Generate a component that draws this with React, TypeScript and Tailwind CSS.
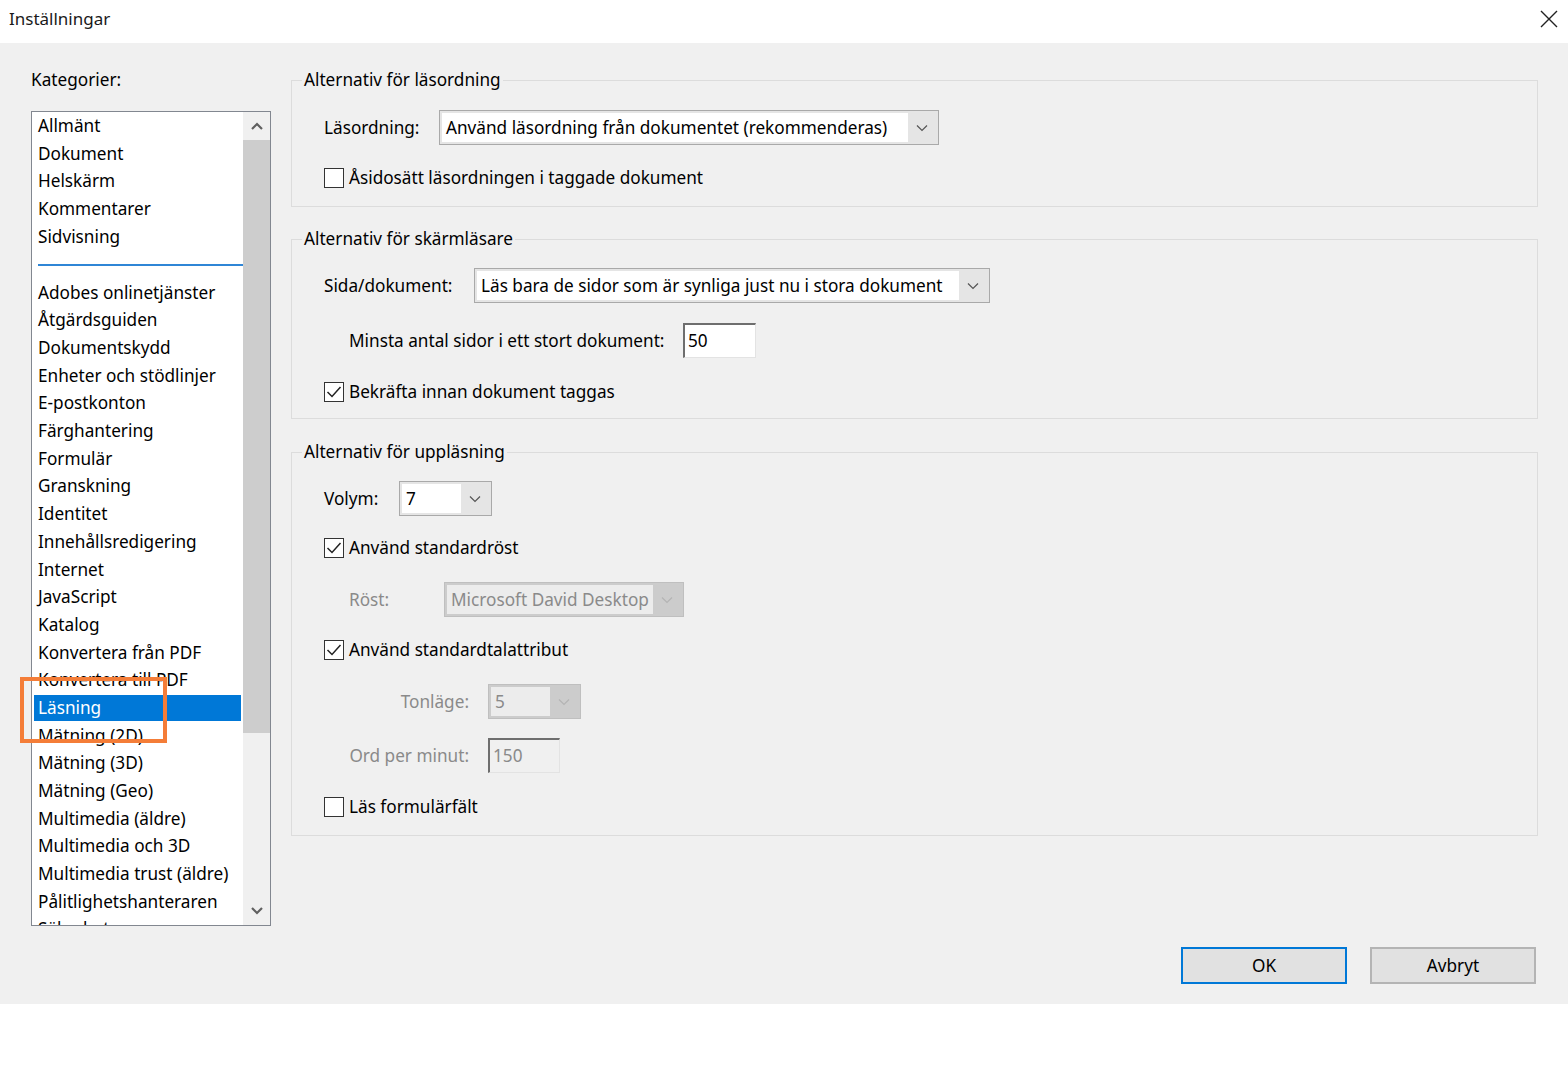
import { ReactNode } from "react";

const upperItems = ["Allmänt", "Dokument", "Helskärm", "Kommentarer", "Sidvisning"];

const lowerItems = [
  "Adobes onlinetjänster",
  "Åtgärdsguiden",
  "Dokumentskydd",
  "Enheter och stödlinjer",
  "E-postkonton",
  "Färghantering",
  "Formulär",
  "Granskning",
  "Identitet",
  "Innehållsredigering",
  "Internet",
  "JavaScript",
  "Katalog",
  "Konvertera från PDF",
  "Konvertera till PDF",
  "Läsning",
  "Mätning (2D)",
  "Mätning (3D)",
  "Mätning (Geo)",
  "Multimedia (äldre)",
  "Multimedia och 3D",
  "Multimedia trust (äldre)",
  "Pålitlighetshanteraren",
  "Säkerhet",
];

const Chevron = ({ disabled }: { disabled?: boolean }) => (
  <svg width="12" height="8" viewBox="0 0 12 8" fill="none">
    <path
      d="M1 1.5 L6 6.5 L11 1.5"
      stroke={disabled ? "#b4b4b4" : "#555"}
      strokeWidth="1.2"
    />
  </svg>
);

const Select = ({
  value,
  width,
  disabled,
}: {
  value: string;
  width: string;
  disabled?: boolean;
}) => (
  <div
    className={`${width} h-[35px] flex p-[2px] border ${
      disabled ? "bg-[#cccccc] border-[#bfbfbf]" : "bg-[#e5e5e5] border-[#a9a9a9]"
    }`}
  >
    <div
      className={`flex-1 flex items-center pl-[4px] whitespace-nowrap overflow-hidden ${
        disabled ? "bg-[#ececec] text-[#8a8a8a]" : "bg-white text-black"
      }`}
    >
      {value}
    </div>
    <div className="w-[28px] flex items-center justify-center">
      <Chevron disabled={disabled} />
    </div>
  </div>
);

const TextInput = ({ value, width, disabled }: { value: string; width: string; disabled?: boolean }) => (
  <div
    className={`${width} h-[35px] flex items-center pl-[3px] border-t-2 border-l-2 border-t-[#6e6e6e] border-l-[#6e6e6e] border-r border-b border-r-[#e3e3e3] border-b-[#e3e3e3] ${
      disabled ? "bg-[#f0f0f0] text-[#8a8a8a]" : "bg-white text-black"
    }`}
  >
    {value}
  </div>
);

const Checkbox = ({ checked, label }: { checked?: boolean; label: string }) => (
  <div className="flex items-center h-[20px]">
    <div className="w-[20px] h-[20px] border border-[#333] bg-white flex items-center justify-center">
      {checked && (
        <svg width="16" height="14" viewBox="0 0 16 14" fill="none">
          <path d="M1.5 7 L6 11.5 L14.5 2" stroke="#222" strokeWidth="1.5" />
        </svg>
      )}
    </div>
    <span className="ml-[5px] whitespace-nowrap">{label}</span>
  </div>
);

const Group = ({ title, className, children }: { title: string; className: string; children: ReactNode }) => (
  <div className={`relative border border-[#dcdcdc] ${className}`}>
    <span className="absolute left-[10px] -top-[13px] px-[2px] bg-[#f0f0f0] leading-[24px]">{title}</span>
    {children}
  </div>
);

const ListRow = ({ label, selected }: { label: string; selected?: boolean }) => (
  <div className="h-[27.68px] px-[2px] flex items-center">
    <div
      className={`w-full h-[26px] flex items-center pl-[4px] whitespace-nowrap ${
        selected ? "bg-[#0078d7] text-white" : "text-black"
      }`}
    >
      {label}
    </div>
  </div>
);

export default function App() {
  return (
    <div
      className="w-[1568px] h-[1066px] bg-white text-[17.2px] text-black overflow-hidden"
      style={{ fontFamily: '"Noto Sans", "Open Sans", sans-serif' }}
    >
      {/* title bar */}
      <div className="h-[43px] flex items-center justify-between pl-[9px] pr-[10px] pb-[6px]">
        <span className="text-[17px] text-[#1a1a1a]">Inställningar</span>
        <svg width="18" height="18" viewBox="0 0 18 18">
          <path d="M1 1 L17 17 M17 1 L1 17" stroke="#222" strokeWidth="1.4" />
        </svg>
      </div>

      {/* dialog body */}
      <div className="h-[961px] bg-[#f0f0f0] flex flex-col">
        <div className="flex">
          {/* categories */}
          <div className="relative pl-[31px] pt-[25px]">
            <div className="leading-[24px]">Kategorier:</div>
            <div className="mt-[19px] w-[240px] h-[815px] border border-[#828790] bg-white flex overflow-hidden">
              <div className="flex-1 overflow-hidden">
                {upperItems.map((item) => (
                  <ListRow key={item} label={item} />
                ))}
                <div className="h-[28.5px] flex items-center pl-[6px]">
                  <div className="w-full h-[2px] bg-[#2f86d6]" />
                </div>
                {lowerItems.map((item) => (
                  <ListRow key={item} label={item} selected={item === "Läsning"} />
                ))}
              </div>
              {/* scrollbar */}
              <div className="w-[27px] bg-[#f0f0f0] flex flex-col">
                <div className="h-[28px] flex items-center justify-center">
                  <svg width="12" height="8" viewBox="0 0 12 8" fill="none">
                    <path d="M1 7 L6 2 L11 7" stroke="#606060" strokeWidth="2.2" />
                  </svg>
                </div>
                <div className="h-[593px] bg-[#cdcdcd]" />
                <div className="flex-1" />
                <div className="h-[28px] flex items-center justify-center">
                  <svg width="12" height="8" viewBox="0 0 12 8" fill="none">
                    <path d="M1 1 L6 6 L11 1" stroke="#606060" strokeWidth="2.2" />
                  </svg>
                </div>
              </div>
            </div>
            {/* orange callout around the selected row */}
            <div className="absolute left-[20px] top-[634px] w-[147px] h-[66px] border-[4px] border-[#f47d38]" />
          </div>

          {/* option groups */}
          <div className="ml-[20px] pt-[37px] w-[1247px] flex flex-col">
            <Group title="Alternativ för läsordning" className="h-[127px] pl-[32px] pt-[29px]">
              <div className="flex items-center">
                <span className="w-[115px]">Läsordning:</span>
                <Select value="Använd läsordning från dokumentet (rekommenderas)" width="w-[500px]" />
              </div>
              <div className="mt-[23px]">
                <Checkbox label="Åsidosätt läsordningen i taggade dokument" />
              </div>
            </Group>

            <Group title="Alternativ för skärmläsare" className="mt-[32px] h-[180px] pl-[32px] pt-[28px]">
              <div className="flex items-center">
                <span className="w-[150px]">Sida/dokument:</span>
                <Select value="Läs bara de sidor som är synliga just nu i stora dokument" width="w-[516px]" />
              </div>
              <div className="mt-[20px] pl-[25px] flex items-center">
                <span className="w-[334px] whitespace-nowrap">Minsta antal sidor i ett stort dokument:</span>
                <TextInput value="50" width="w-[73px]" />
              </div>
              <div className="mt-[24px]">
                <Checkbox checked label="Bekräfta innan dokument taggas" />
              </div>
            </Group>

            <Group title="Alternativ för uppläsning" className="mt-[33px] h-[384px] pl-[32px] pt-[28px]">
              <div className="flex items-center">
                <span className="w-[75px]">Volym:</span>
                <Select value="7" width="w-[93px]" />
              </div>
              <div className="mt-[22px]">
                <Checkbox checked label="Använd standardröst" />
              </div>
              <div className="mt-[24px] pl-[25px] flex items-center">
                <span className="w-[95px] text-[#8a8a8a]">Röst:</span>
                <Select value="Microsoft David Desktop" width="w-[240px]" disabled />
              </div>
              <div className="mt-[23px]">
                <Checkbox checked label="Använd standardtalattribut" />
              </div>
              <div className="mt-[24px] pl-[25px] flex items-center">
                <span className="w-[120px] text-right whitespace-nowrap text-[#8a8a8a]">Tonläge:</span>
                <div className="ml-[19px]">
                  <Select value="5" width="w-[93px]" disabled />
                </div>
              </div>
              <div className="mt-[19px] pl-[25px] flex items-center">
                <span className="w-[120px] text-right whitespace-nowrap text-[#8a8a8a]">Ord per minut:</span>
                <div className="ml-[19px]">
                  <TextInput value="150" width="w-[72px]" disabled />
                </div>
              </div>
              <div className="mt-[24px]">
                <Checkbox label="Läs formulärfält" />
              </div>
            </Group>
          </div>
        </div>

        {/* footer buttons */}
        <div className="mt-auto pb-[20px] pr-[32px] flex justify-end gap-[23px]">
          <button className="w-[166px] h-[37px] bg-[#e1e1e1] border-2 border-[#0078d7]">OK</button>
          <button className="w-[166px] h-[37px] bg-[#e1e1e1] border-2 border-[#b4b4b4]">Avbryt</button>
        </div>
      </div>
    </div>
  );
}
